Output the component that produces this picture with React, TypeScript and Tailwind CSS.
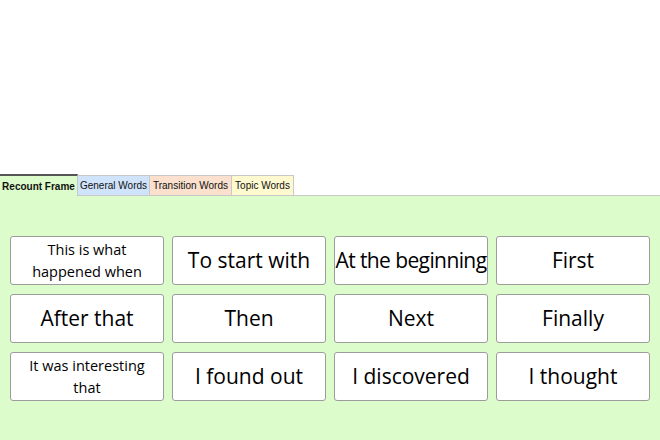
import React from 'react';

const rows = [
  ['This is what happened when', 'To start with', 'At the beginning', 'First'],
  ['After that', 'Then', 'Next', 'Finally'],
  ['It was interesting that', 'I found out', 'I discovered', 'I thought'],
];

const small = new Set(['This is what happened when', 'It was interesting that']);

const tabs = [
  { label: 'General Words', cls: 'bg-[#cfe3fa] w-[72px]' },
  { label: 'Transition Words', cls: 'bg-[#fae0cd] w-[82px]' },
  { label: 'Topic Words', cls: 'bg-[#fef9cf] w-[62px]' },
];

export default function App() {
  return (
    <div className="w-[660px] h-[440px] bg-white flex flex-col overflow-hidden" style={{ fontFamily: '"Open Sans", sans-serif' }}>
      <div className="h-[174px]" />
      <div
        className="flex items-end h-[22px] border-b border-[#c8c8c8] text-[10px] text-[#111]"
        style={{ fontFamily: '"Liberation Sans", Arial, sans-serif' }}
      >
        <div className="h-[22px] w-[78px] bg-[#ddfccb] border-t-2 border-r border-t-[#555] border-r-[#c8c8c8] -mb-px flex items-center justify-center font-bold">
          Recount Frame
        </div>
        {tabs.map((t) => (
          <div key={t.label} className={`h-[20px] border-t border-r border-[#c8c8c8] flex items-center justify-center ${t.cls}`}>
            {t.label}
          </div>
        ))}
      </div>
      <div className="flex-1 bg-[#ddfccb] pt-[40px] pl-[10px]">
        <div className="grid grid-cols-[repeat(4,154px)] gap-x-[8px] gap-y-[9px]">
          {rows.flat().map((w) => (
            <div
              key={w}
              className="h-[49px] bg-white border border-[#9c9c9c] rounded-[3px] flex items-center justify-center text-center text-black"
            >
              {small.has(w) ? (
                <span className="text-[14.5px] leading-[22px] px-[12px]">{w}</span>
              ) : (
                <span className={`text-[21px] leading-none whitespace-nowrap ${w === 'At the beginning' ? 'tracking-[-0.6px]' : ''}`}>{w}</span>
              )}
            </div>
          ))}
        </div>
      </div>
    </div>
  );
}
